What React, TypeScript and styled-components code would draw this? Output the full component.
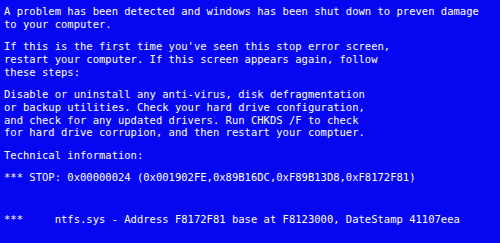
import React from "react";
import styled, { createGlobalStyle } from "styled-components";

const Global = createGlobalStyle`
  html, body {
    margin: 0;
    padding: 0;
    background: #0606f0;
  }
  body {
    width: 500px;
    height: 243px;
    overflow: hidden;
  }
`;

const Screen = styled.div`
  width: 500px;
  height: 243px;
  box-sizing: border-box;
  background: #0606f0;
  color: #ffffff;
  font-family: "DejaVu Sans Mono", "Liberation Mono", monospace;
  font-size: 10.52px;
  line-height: 12.7px;
  padding: 5px 0 0 4px;
  display: flex;
  flex-direction: column;
`;

const Para = styled.div<{ $gap?: number }>`
  white-space: pre;
  margin-bottom: ${(p) => p.$gap ?? 9.8}px;
`;

export default function App() {
  return (
    <>
      <Global />
      <Screen>
        <Para>{`A problem has been detected and windows has been shut down to preven damage
to your computer.`}</Para>
        <Para>{`If this is the first time you've seen this stop error screen,
restart your computer. If this screen appears again, follow
these steps:`}</Para>
        <Para>{`Disable or uninstall any anti-virus, disk defragmentation
or backup utilities. Check your hard drive configuration,
and check for any updated drivers. Run CHKDS /F to check
for hard drive corrupion, and then restart your comptuer.`}</Para>
        <Para>{`Technical information:`}</Para>
        <Para $gap={29.4}>{`*** STOP: 0x00000024 (0x001902FE,0x89B16DC,0xF89B13D8,0xF8172F81)`}</Para>
        <Para>{`***     ntfs.sys - Address F8172F81 base at F8123000, DateStamp 41107eea`}</Para>
      </Screen>
    </>
  );
}
